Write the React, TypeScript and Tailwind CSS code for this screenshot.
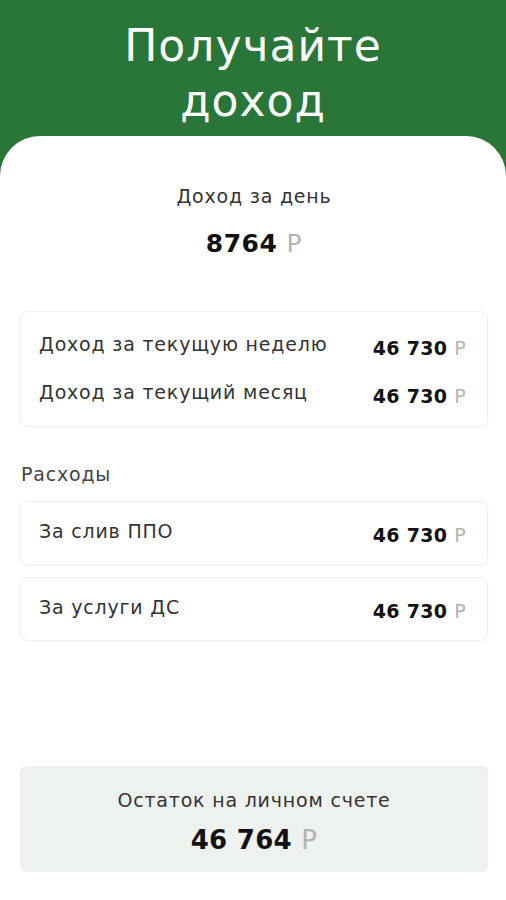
import React from "react";

const font = { fontFamily: '"DejaVu Sans", "Noto Sans", sans-serif' };

function Rub() {
  return <span className="font-normal text-[#b3b3b3]">Р</span>;
}

function Row({ label, value }: { label: string; value: string }) {
  return (
    <div className="flex items-center justify-between">
      <span className="-translate-y-[2px] text-[19px] leading-6 tracking-[0.8px] text-[#333]">{label}</span>
      <span className="translate-y-[2px] text-[19px] leading-6 font-bold tracking-[0.3px] text-[#111]">
        {value} <Rub />
      </span>
    </div>
  );
}

export default function App() {
  return (
    <div className="min-h-[900px] w-full bg-[#2a7638]" style={font}>
      <header className="flex h-[136px] flex-col items-center justify-center pt-[9px] text-center text-white">
        <h1 className="text-[44px] leading-[55px] font-normal tracking-[1px]">Получайте</h1>
        <h1 className="text-[44px] leading-[55px] font-normal tracking-[1px]">доход</h1>
      </header>
      <main className="flex min-h-[764px] flex-col rounded-t-[40px] bg-white pt-[48px] pr-[18px] pb-7 pl-5">
        <div className="text-center">
          <p className="text-[19px] leading-6 tracking-[0.8px] text-[#333]">Доход за день</p>
          <p className="mt-[22px] text-[25px] leading-7 font-bold tracking-[0.5px] text-[#111]">
            8764 <Rub />
          </p>
        </div>

        <div className="mt-[53px] flex flex-col gap-[24px] rounded-lg border border-[#f0f0f0] pt-[22px] pr-[21px] pb-[20px] pl-[18px] shadow-[0_1px_3px_rgba(0,0,0,0.04)]">
          <Row label="Доход за текущую неделю" value="46 730" />
          <Row label="Доход за текущий месяц" value="46 730" />
        </div>

        <p className="mt-[35px] pl-[1px] text-[19px] leading-6 tracking-[0.8px] text-[#444]">Расходы</p>

        <div className="mt-[15px] rounded-lg border border-[#f0f0f0] py-[19px] pr-[21px] pl-[18px] shadow-[0_1px_3px_rgba(0,0,0,0.04)]">
          <Row label="За слив ППО" value="46 730" />
        </div>
        <div className="mt-[12px] rounded-lg border border-[#f0f0f0] py-[19px] pr-[21px] pl-[18px] shadow-[0_1px_3px_rgba(0,0,0,0.04)]">
          <Row label="За услуги ДС" value="46 730" />
        </div>

        <div className="mt-auto rounded-md bg-[#eef2ee] pt-[22px] pb-[16px] text-center">
          <p className="text-[19px] leading-6 tracking-[0.8px] text-[#333]">Остаток на личном счете</p>
          <p className="mt-[12px] text-[26px] leading-8 font-bold tracking-[0.3px] text-[#111]">
            46 764 <Rub />
          </p>
        </div>
      </main>
    </div>
  );
}
